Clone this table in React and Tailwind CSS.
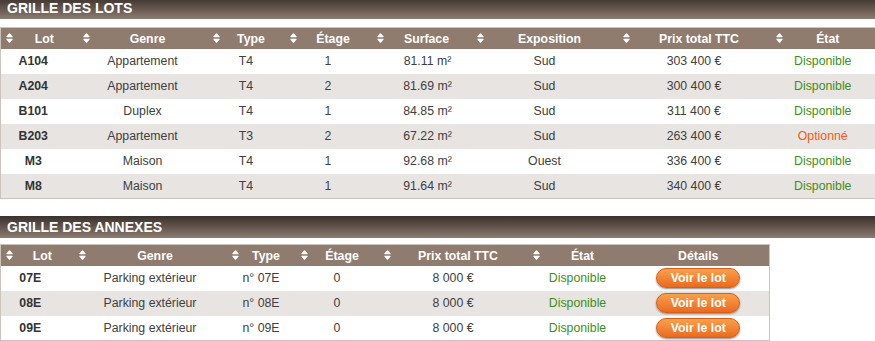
const lots = [
  ["A104", "Appartement", "T4", "1", "81.11 m²", "Sud", "303 400 €", "Disponible"],
  ["A204", "Appartement", "T4", "2", "81.69 m²", "Sud", "300 400 €", "Disponible"],
  ["B101", "Duplex", "T4", "1", "84.85 m²", "Sud", "311 400 €", "Disponible"],
  ["B203", "Appartement", "T3", "2", "67.22 m²", "Sud", "263 400 €", "Optionné"],
  ["M3", "Maison", "T4", "1", "92.68 m²", "Ouest", "336 400 €", "Disponible"],
  ["M8", "Maison", "T4", "1", "91.64 m²", "Sud", "340 400 €", "Disponible"],
]

const annexes = [
  ["07E", "Parking extérieur", "n° 07E", "0", "8 000 €", "Disponible"],
  ["08E", "Parking extérieur", "n° 08E", "0", "8 000 €", "Disponible"],
  ["09E", "Parking extérieur", "n° 09E", "0", "8 000 €", "Disponible"],
]

function SortIcon() {
  return (
    <svg width="7" height="10" viewBox="0 0 7 10" className="absolute left-[5px] top-1/2 -translate-y-1/2">
      <path d="M3.5 0.3 Q3.9 0.3 4.3 0.8 L6.6 3.6 Q7 4.3 6.2 4.3 H0.8 Q0 4.3 0.4 3.6 L2.7 0.8 Q3.1 0.3 3.5 0.3 Z" fill="#fff" />
      <path d="M3.5 9.7 Q3.9 9.7 4.3 9.2 L6.6 6.4 Q7 5.7 6.2 5.7 H0.8 Q0 5.7 0.4 6.4 L2.7 9.2 Q3.1 9.7 3.5 9.7 Z" fill="#fff" />
    </svg>
  )
}

function Title({ children }) {
  return (
    <div className="h-[22px] bg-gradient-to-b from-[#3b312c] to-[#8d7c70] pl-[7px] text-[14px] font-bold leading-[22px] text-white">
      {children}
    </div>
  )
}

function Head({ label, sort = true }) {
  return (
    <th className="relative h-[21px] p-0 pt-px text-center text-[12.3px] font-bold text-white">
      {sort && <SortIcon />}
      <span className={sort ? "pl-[10px]" : ""}>{label}</span>
    </th>
  )
}

function Etat({ value }) {
  return (
    <span className={value === "Optionné" ? "text-[#f25c14]" : "text-[#3f8f16]"}>{value}</span>
  )
}

export default function App() {
  return (
    <div className="w-[875px] overflow-hidden bg-white text-[#404040]" style={{ fontFamily: '"Liberation Sans", Arial, sans-serif' }}>
      <div className="-mt-[3px]">
        <Title>GRILLE DES LOTS</Title>
      </div>

      <table className="mt-[8px] w-[875px] table-fixed border-collapse border border-[#cbc3bc] text-[12.3px]">
        <colgroup>
          <col className="w-[77px]" />
          <col className="w-[130px]" />
          <col className="w-[77px]" />
          <col className="w-[87px]" />
          <col className="w-[100px]" />
          <col className="w-[146px]" />
          <col className="w-[153px]" />
          <col className="w-[105px]" />
        </colgroup>
        <thead className="bg-[#8f7c6f]">
          <tr>
            <Head label="Lot" />
            <Head label="Genre" />
            <Head label="Type" />
            <Head label="Étage" />
            <Head label="Surface" />
            <Head label="Exposition" />
            <Head label="Prix total TTC" />
            <Head label="État" />
          </tr>
        </thead>
        <tbody>
          {lots.map((r, i) => (
            <tr key={r[0]} className={i % 2 ? "h-[25px] bg-[#e8e4e1]" : "h-[25px] bg-white"}>
              <td className="pr-[12px] text-center font-bold text-[#333]">{r[0]}</td>
              <td className="text-center">{r[1]}</td>
              <td className="text-center">{r[2]}</td>
              <td className="text-center">{r[3]}</td>
              <td className="pl-[12px] text-center">{r[4]}</td>
              <td className="text-center">{r[5]}</td>
              <td className="text-center">{r[6]}</td>
              <td className="text-center"><Etat value={r[7]} /></td>
            </tr>
          ))}
        </tbody>
      </table>

      <div className="mt-[17px]">
        <Title>GRILLE DES ANNEXES</Title>
      </div>

      <table className="mt-[6px] w-[769px] table-fixed border-collapse border border-[#cbc3bc] text-[12.3px]">
        <colgroup>
          <col className="w-[73px]" />
          <col className="w-[153px]" />
          <col className="w-[69px]" />
          <col className="w-[83px]" />
          <col className="w-[149px]" />
          <col className="w-[100px]" />
          <col className="w-[142px]" />
        </colgroup>
        <thead className="bg-[#8f7c6f]">
          <tr>
            <Head label="Lot" />
            <Head label="Genre" />
            <Head label="Type" />
            <Head label="Étage" />
            <Head label="Prix total TTC" />
            <Head label="État" />
            <Head label="Détails" sort={false} />
          </tr>
        </thead>
        <tbody>
          {annexes.map((r, i) => (
            <tr key={r[0]} className={i % 2 ? "h-[25px] bg-[#e8e4e1]" : "h-[25px] bg-white"}>
              <td className="pr-[14px] text-center font-bold text-[#333]">{r[0]}</td>
              <td className="text-center">{r[1]}</td>
              <td className="text-center">{r[2]}</td>
              <td className="text-center">{r[3]}</td>
              <td className="text-center">{r[4]}</td>
              <td className="text-center"><Etat value={r[5]} /></td>
              <td className="text-center">
                <button className="h-[20px] w-[84px] rounded-full border border-[#d8601c] bg-gradient-to-b from-[#f9a04a] to-[#ea6a1e] text-[12.3px] font-bold leading-[18px] text-white shadow-[0_1px_2px_rgba(0,0,0,0.45)]">
                  Voir le lot
                </button>
              </td>
            </tr>
          ))}
        </tbody>
      </table>
    </div>
  )
}
